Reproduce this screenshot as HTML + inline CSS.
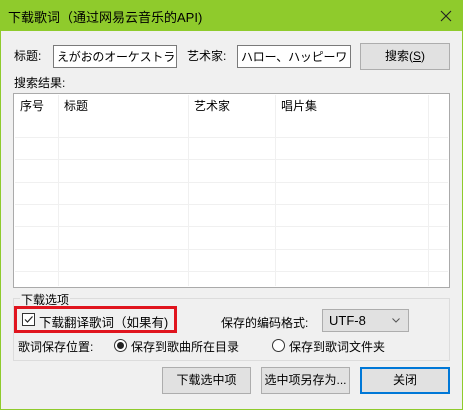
<!DOCTYPE html><html><head><meta charset="utf-8"><style>
*{margin:0;padding:0;box-sizing:border-box}
body{width:463px;height:410px;overflow:hidden;background:#8fcb2c;font-family:"Liberation Sans","Noto Sans CJK SC",sans-serif;font-size:12px;color:#000;position:relative}
.a{position:absolute}
.win{left:1px;top:31px;width:461px;height:378px;background:#f0f0f0}
.inp{background:#fff;border:1px solid #7a7a7a;padding:3px 3px;height:23px;white-space:nowrap;overflow:hidden;font-size:12px;line-height:16px;letter-spacing:-0.2px}
.btn{background:#e1e1e1;border:1px solid #adadad;text-align:center;line-height:24px}
.vl{position:absolute;top:1px;bottom:1px;width:1px;background:#f0f0f0}
.hl{position:absolute;left:1px;right:1px;height:1px;background:#f0f0f0}
</style></head><body>
<div class="a" style="left:8px;top:7px;font-size:13px">下载歌词（通过网易云音乐的API)</div>
<svg class="a" style="left:440px;top:10px" width="12" height="12"><path d="M1 1L11 11M11 1L1 11" stroke="#222" stroke-width="1.1"/></svg>
<div class="a win"></div>
<div class="a" style="left:14px;top:47px">标题:</div>
<div class="a inp" style="left:53px;top:45px;width:124px">えがおのオーケストラ</div>
<div class="a" style="left:187px;top:47px">艺术家:</div>
<div class="a inp" style="left:237px;top:45px;width:114px">ハロー、ハッピーワ</div>
<div class="a btn" style="left:360px;top:43px;width:90px;height:27px;line-height:25px">搜索(<u>S</u>)</div>
<div class="a" style="left:14px;top:74px">搜索结果:</div>
<div class="a" style="left:13px;top:93px;width:437px;height:195px;background:#fff;border:1px solid #aaa">
<div class="vl" style="left:44px"></div><div class="vl" style="left:174px"></div><div class="vl" style="left:261px"></div><div class="vl" style="left:414px"></div>
<div class="hl" style="top:43px"></div><div class="hl" style="top:65px"></div><div class="hl" style="top:88px"></div><div class="hl" style="top:110px"></div><div class="hl" style="top:132px"></div><div class="hl" style="top:155px"></div><div class="hl" style="top:177px"></div>
<div class="a" style="left:6px;top:3px">序号</div><div class="a" style="left:50px;top:3px">标题</div><div class="a" style="left:180px;top:3px">艺术家</div><div class="a" style="left:267px;top:3px">唱片集</div>
</div>
<div class="a" style="left:13px;top:298px;width:437px;height:63px;border:1px solid #dcdcdc"></div>
<div class="a" style="left:20px;top:291px;background:#f0f0f0;padding:0 1px">下载选项</div>
<div class="a" style="left:14px;top:306px;width:163px;height:27px;border:3px solid #e0141e"></div>
<div class="a" style="left:22px;top:313px;width:13px;height:13px;border:1px solid #333;background:#fff"><svg width="11" height="11" style="display:block"><path d="M2 5.5L4.5 8L9.5 2.5" stroke="#222" stroke-width="1.2" fill="none"/></svg></div>
<div class="a" style="left:39px;top:312px;font-size:12.5px">下载翻译歌词（如果有)</div>
<div class="a" style="left:221px;top:314px">保存的编码格式:</div>
<div class="a btn" style="left:322px;top:309px;width:87px;height:23px;text-align:left;padding-left:6px;line-height:21px;font-size:13px">UTF-8<svg style="position:absolute;right:8px;top:8px" width="8" height="5"><path d="M0.5 0.5L4 4L7.5 0.5" stroke="#555" fill="none"/></svg></div>
<div class="a" style="left:18px;top:338px">歌词保存位置:</div>
<div class="a" style="left:114px;top:339px;width:13px;height:13px;border:1px solid #333;border-radius:50%;background:#fff"><div style="margin:2px;width:7px;height:7px;border-radius:50%;background:#222"></div></div>
<div class="a" style="left:131px;top:338px">保存到歌曲所在目录</div>
<div class="a" style="left:272px;top:339px;width:13px;height:13px;border:1px solid #333;border-radius:50%;background:#fff"></div>
<div class="a" style="left:289px;top:338px">保存到歌词文件夹</div>
<div class="a btn" style="left:162px;top:367px;width:89px;height:27px">下载选中项</div>
<div class="a btn" style="left:261px;top:367px;width:89px;height:27px">选中项另存为...</div>
<div class="a btn" style="left:360px;top:367px;width:90px;height:27px;border:2px solid #0078d7;line-height:22px">关闭</div>
</body></html>
